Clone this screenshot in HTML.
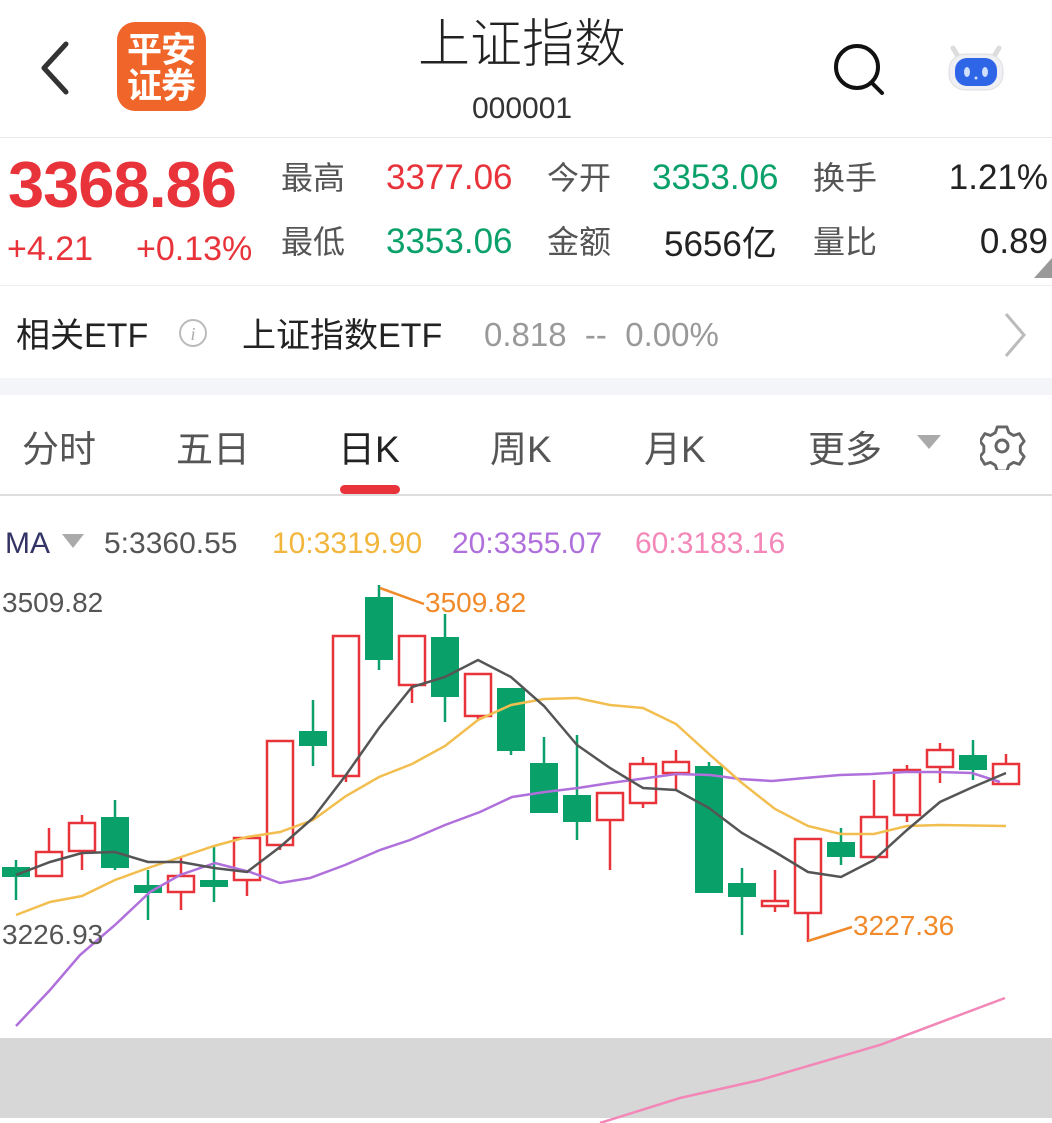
<!DOCTYPE html>
<html><head><meta charset="utf-8"><style>
*{margin:0;padding:0;box-sizing:border-box}
body{width:1052px;height:1123px;background:#fff;position:relative;overflow:hidden;font-family:"Liberation Sans","Noto Sans CJK SC",sans-serif;}
.a{position:absolute;white-space:nowrap;line-height:1}
.r{color:#e8333a}.g{color:#0aa06a}.k{color:#333}.l{color:#555}
</style></head><body>
<svg class="a" style="left:36px;top:40px" width="36" height="56"><path d="M30 4 L8 28 L30 52" fill="none" stroke="#333" stroke-width="5" stroke-linecap="round" stroke-linejoin="round"/></svg>
<div class="a" style="left:117px;top:22px;width:89px;height:89px;background:#f0662a;border-radius:18px;color:#fff;font-weight:bold;font-size:35px;line-height:36px;padding:8px 0 0 10px;font-family:'Noto Sans CJK SC',sans-serif;letter-spacing:-1px">平安<br>证券</div>
<div class="a k" style="left:418px;top:14px;font-size:52px;font-family:'Noto Sans CJK SC',sans-serif;font-weight:300;color:#222">上证指数</div>
<div class="a k" style="left:472px;top:94px;font-size:30px;color:#333">000001</div>
<svg class="a" style="left:830px;top:40px" width="60" height="60"><circle cx="27" cy="27" r="21" fill="none" stroke="#111" stroke-width="4"/><path d="M42 43 L52 53" stroke="#111" stroke-width="4" stroke-linecap="round"/></svg>
<svg class="a" style="left:945px;top:42px" width="62" height="52"><path d="M8 6 L14 16 M54 6 L48 16" stroke="#ddd" stroke-width="5" stroke-linecap="round"/><rect x="4" y="12" width="54" height="36" rx="16" fill="#eef0f4" stroke="#ddd"/><rect x="10" y="16" width="42" height="28" rx="12" fill="#2f66e8"/><ellipse cx="22" cy="30" rx="3" ry="5" fill="#cfe0ff"/><ellipse cx="40" cy="30" rx="3" ry="5" fill="#cfe0ff"/><circle cx="31" cy="36" r="1.5" fill="#cfe0ff"/></svg>
<div class="a" style="left:0;top:137px;width:1052px;height:1px;background:#e8e8e8"></div>
<div class="a r" style="left:8px;top:152px;font-size:65px;font-weight:bold;letter-spacing:-1px">3368.86</div>
<div class="a r" style="left:7px;top:232px;font-size:34px">+4.21</div>
<div class="a r" style="left:136px;top:232px;font-size:34px">+0.13%</div>
<div class="a l" style="left:281px;top:160px;font-size:32px;font-family:'Noto Sans CJK SC',sans-serif">最高</div>
<div class="a l" style="left:281px;top:224px;font-size:32px;font-family:'Noto Sans CJK SC',sans-serif">最低</div>
<div class="a r" style="left:386px;top:160px;font-size:35px">3377.06</div>
<div class="a g" style="left:386px;top:224px;font-size:35px">3353.06</div>
<div class="a l" style="left:547px;top:160px;font-size:32px;font-family:'Noto Sans CJK SC',sans-serif">今开</div>
<div class="a l" style="left:547px;top:224px;font-size:32px;font-family:'Noto Sans CJK SC',sans-serif">金额</div>
<div class="a g" style="left:652px;top:160px;font-size:35px">3353.06</div>
<div class="a k" style="left:664px;top:224px;font-size:35px;color:#222">5656<span style="font-family:'Noto Sans CJK SC',sans-serif">亿</span></div>
<div class="a l" style="left:813px;top:160px;font-size:32px;font-family:'Noto Sans CJK SC',sans-serif">换手</div>
<div class="a l" style="left:813px;top:224px;font-size:32px;font-family:'Noto Sans CJK SC',sans-serif">量比</div>
<div class="a" style="right:4px;top:160px;font-size:35px;color:#222">1.21%</div>
<div class="a" style="right:4px;top:224px;font-size:35px;color:#222">0.89</div>
<svg class="a" style="left:1034px;top:258px" width="18" height="20"><path d="M18 0 L18 20 L0 20Z" fill="#999"/></svg>
<div class="a" style="left:0;top:285px;width:1052px;height:1px;background:#eee"></div>
<div class="a" style="left:16px;top:316px;font-size:34px;color:#222;font-family:'Noto Sans CJK SC',sans-serif">相关<span style="font-family:'Liberation Sans'">ETF</span></div>
<svg class="a" style="left:177px;top:317px" width="32" height="32"><circle cx="16" cy="16" r="13" fill="none" stroke="#bbb" stroke-width="2"/><text x="16" y="23" font-size="18" font-style="italic" fill="#aaa" text-anchor="middle" font-family="Liberation Serif">i</text></svg>
<div class="a" style="left:242px;top:316px;font-size:34px;color:#222;font-family:'Noto Sans CJK SC',sans-serif">上证指数<span style="font-family:'Liberation Sans'">ETF</span></div>
<div class="a" style="left:484px;top:318px;font-size:33px;color:#999">0.818&nbsp;&nbsp;--&nbsp;&nbsp;0.00%</div>
<svg class="a" style="left:1000px;top:310px" width="30" height="50"><path d="M6 4 L24 25 L6 46" fill="none" stroke="#bbb" stroke-width="3"/></svg>
<div class="a" style="left:0;top:378px;width:1052px;height:17px;background:#f4f5f8"></div>
<div class="a" style="left:22px;top:428px;font-size:37px;color:#555;font-family:'Noto Sans CJK SC',sans-serif">分时</div>
<div class="a" style="left:176px;top:428px;font-size:37px;color:#555;font-family:'Noto Sans CJK SC',sans-serif">五日</div>
<div class="a" style="left:338px;top:428px;font-size:37px;color:#222;font-family:'Noto Sans CJK SC',sans-serif">日<span style="font-family:'Liberation Sans'">K</span></div>
<div class="a" style="left:490px;top:428px;font-size:37px;color:#555;font-family:'Noto Sans CJK SC',sans-serif">周<span style="font-family:'Liberation Sans'">K</span></div>
<div class="a" style="left:644px;top:428px;font-size:37px;color:#555;font-family:'Noto Sans CJK SC',sans-serif">月<span style="font-family:'Liberation Sans'">K</span></div>
<div class="a" style="left:808px;top:428px;font-size:37px;color:#555;font-family:'Noto Sans CJK SC',sans-serif">更多</div>
<svg class="a" style="left:917px;top:435px" width="24" height="16"><path d="M0 0 L24 0 L12 14Z" fill="#aaa"/></svg>
<svg class="a" style="left:980px;top:424px" width="46" height="46"><path d="M18 3h10l2 6 5 3 6-2 5 8-4 5v6l4 5-5 8-6-2-5 3-2 6H18l-2-6-5-3-6 2-5-8 4-5v-6l-4-5 5-8 6 2 5-3z" transform="scale(0.96)" fill="none" stroke="#666" stroke-width="3" stroke-linejoin="round"/><circle cx="22" cy="22" r="6" fill="none" stroke="#666" stroke-width="3"/></svg>
<div class="a" style="left:340px;top:485px;width:60px;height:9px;border-radius:5px;background:#e8333a"></div>
<div class="a" style="left:0;top:494px;width:1052px;height:2px;background:#ddd"></div>
<div class="a" style="left:5px;top:529px;font-size:30px;color:#336"><span>MA</span></div>
<svg class="a" style="left:62px;top:534px" width="24" height="16"><path d="M0 0 L22 0 L11 14Z" fill="#aaa"/></svg>
<div class="a" style="left:104px;top:529px;font-size:30px;color:#555">5:3360.55</div>
<div class="a" style="left:272px;top:529px;font-size:30px;color:#f2b63c">10:3319.90</div>
<div class="a" style="left:452px;top:529px;font-size:30px;color:#b070dc">20:3355.07</div>
<div class="a" style="left:635px;top:529px;font-size:30px;color:#f287b8">60:3183.16</div>

<svg class="a" style="left:0;top:0" width="1052" height="1123">
<rect x="0" y="1038" width="1052" height="80" fill="#d7d7d7"/>
<g id="c"></g>
<polyline fill="none" stroke="#f287b8" stroke-width="2.5" points="600,1123 680,1098 760,1080 880,1045 1005,998"/>
<polyline fill="none" stroke="#b070dc" stroke-width="2.5" points="16,1026 50,990 80,955 115,925 150,892 180,875 215,863 250,872 280,883 310,878 345,865 380,850 410,840 445,825 480,812 512,797 545,792 578,788 610,783 640,779 676,774 710,775 740,779 772,781 805,778 840,775 872,774 905,772 938,772 972,773 1000,782"/>
<polyline fill="none" stroke="#f2be4f" stroke-width="2.5" points="16,915 50,902 82,896 115,880 148,868 181,857 214,846 247,837 280,832 313,820 346,796 379,777 412,764 445,746 478,720 511,705 544,699 577,698 610,705 643,708 676,724 709,754 742,783 775,809 808,826 841,834 874,834 907,826 940,825 1006,826"/>
<polyline fill="none" stroke="#555" stroke-width="2.5" points="16,875 50,862 82,853 115,852 148,862 181,862 214,868 247,872 280,847 313,818 346,775 379,728 412,687 445,677 478,660 511,677 544,706 577,745 610,768 643,788 676,790 709,808 742,833 775,852 808,872 841,877 874,860 907,830 940,802 973,787 1006,773"/>
<text x="2" y="612" font-size="28" fill="#555" font-family="Liberation Sans">3509.82</text>
<text x="2" y="944" font-size="28" fill="#555" font-family="Liberation Sans">3226.93</text>
<path d="M380 588 L424 604" stroke="#f08a2a" stroke-width="2.5"/>
<text x="425" y="612" font-size="28" fill="#f08a2a" font-family="Liberation Sans">3509.82</text>
<path d="M808 941 L852 927" stroke="#f08a2a" stroke-width="2.5"/>
<text x="853" y="935" font-size="28" fill="#f08a2a" font-family="Liberation Sans">3227.36</text>
</svg>
<script>
var d=[[16,'g',867,877,860,900],[49,'r',852,876,828,870],[82,'r',823,851,815,870],[115,'g',817,868,800,870],[148,'g',885,893,870,920],[181,'r',876,892,858,910],[214,'g',880,887,845,902],[247,'r',838,880,838,896],[280,'r',741,845,741,850],[313,'g',731,746,700,766],[346,'r',636,776,636,782],[379,'g',597,660,585,670],[412,'r',636,685,636,703],[445,'g',637,697,614,722],[478,'r',674,716,674,720],[511,'g',688,751,688,755],[544,'g',763,813,737,813],[577,'g',795,822,735,840],[610,'r',793,820,793,870],[643,'r',764,803,757,808],[676,'r',762,773,750,790],[709,'g',766,893,762,893],[742,'g',883,897,868,935],[775,'r',901,906,870,912],[808,'r',839,913,839,942],[841,'g',842,857,828,865],[874,'r',817,857,780,857],[907,'r',770,815,765,822],[940,'r',750,767,743,783],[973,'g',755,770,740,780],[1006,'r',764,784,754,785]];
var s='';d.forEach(function(c){var col=c[1]=='r'?'#e8333a':'#0aa06a';
s+='<line x1="'+c[0]+'" x2="'+c[0]+'" y1="'+c[4]+'" y2="'+c[5]+'" stroke="'+col+'" stroke-width="2.5"/>';
if(c[1]=='r')s+='<rect x="'+(c[0]-13)+'" y="'+c[2]+'" width="26" height="'+(c[3]-c[2])+'" fill="#fff" stroke="'+col+'" stroke-width="2.5"/>';
else s+='<rect x="'+(c[0]-14)+'" y="'+c[2]+'" width="28" height="'+(c[3]-c[2])+'" fill="'+col+'"/>';});
document.getElementById('c').innerHTML=s;
</script>
</body></html>
